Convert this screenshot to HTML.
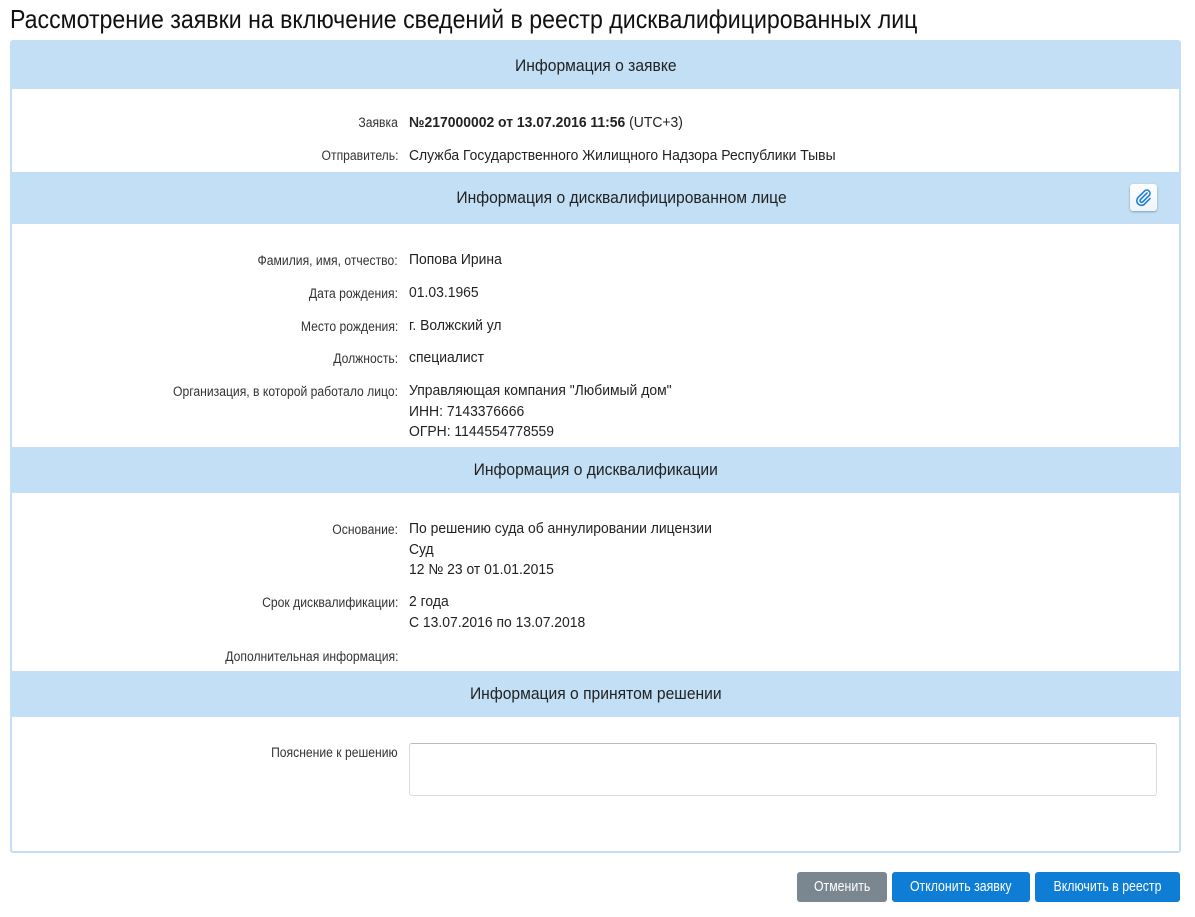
<!DOCTYPE html>
<html><head><meta charset="utf-8"><style>
body{margin:0;background:#fff;font-family:"Liberation Sans",sans-serif;color:#222;width:1195px;height:917px;position:relative;overflow:hidden}
h1{position:absolute;left:10px;top:4px;margin:0;font-weight:normal;font-size:26px;color:#111;white-space:nowrap;transform:scaleX(.89);transform-origin:left}
.panel{position:absolute;left:10px;top:40px;width:1167px;height:809px;border:2px solid #c3def5;border-radius:3px}
.hd{position:absolute;left:0;width:1167px;background:#c2dff5;text-align:center;font-size:17px;color:#222;box-sizing:border-box}
.hd span{display:inline-block;transform:scaleX(.92)}
.l{position:absolute;right:781px;font-size:13.5px;color:#333;text-align:right;white-space:nowrap;transform:scaleX(.9);transform-origin:right}
.v{position:absolute;left:397px;font-size:14.5px;color:#222;line-height:20.5px;white-space:nowrap;transform:scaleX(.96);transform-origin:left}
.btn{position:absolute;top:872px;height:30px;line-height:30px;color:#fff;text-align:center;font-size:14.5px;border-radius:3px}
.btn span{display:inline-block;transform:scaleX(.85)}
</style></head><body>
<h1>Рассмотрение заявки на включение сведений в реестр дисквалифицированных лиц</h1>
<div class="panel">
<div class="hd" style="top:0;height:47px;line-height:47px"><span>Информация о заявке</span></div>
<div class="l" style="top:73px">Заявка</div>
<div class="v" style="top:71px"><b>№217000002 от 13.07.2016 11:56</b> (UTC+3)</div>
<div class="l" style="top:106px">Отправитель:</div>
<div class="v" style="top:104px">Служба Государственного Жилищного Надзора Республики Тывы</div>
<div class="hd" style="top:130px;height:52px;line-height:52px;padding-left:52px"><span>Информация о дисквалифицированном лице</span></div>
<div style="position:absolute;left:1118px;top:142px;width:27px;height:27px;background:linear-gradient(#fff,#eef4fa);border-radius:3px;box-shadow:0 1px 2px rgba(0,0,0,.3)"><svg width="27" height="27" viewBox="0 0 27 27"><path d="M17 9 L10.5 15.5 a1.6 1.6 0 0 0 2.3 2.3 L19.3 11.3 a3.2 3.2 0 0 0 -4.5 -4.5 L8 13.6 a4.6 4.6 0 0 0 6.5 6.5 L20 14.6" fill="none" stroke="#1f7fd6" stroke-width="1.6" stroke-linecap="round"/></svg></div>
<div class="l" style="top:211px">Фамилия, имя, отчество:</div>
<div class="v" style="top:208px">Попова Ирина</div>
<div class="l" style="top:244px">Дата рождения:</div>
<div class="v" style="top:241px">01.03.1965</div>
<div class="l" style="top:277px">Место рождения:</div>
<div class="v" style="top:274px">г. Волжский ул</div>
<div class="l" style="top:309px">Должность:</div>
<div class="v" style="top:306px">специалист</div>
<div class="l" style="top:342px">Организация, в которой работало лицо:</div>
<div class="v" style="top:339px">Управляющая компания "Любимый дом"<br>ИНН: 7143376666<br>ОГРН: 1144554778559</div>
<div class="hd" style="top:405px;height:46px;line-height:46px"><span>Информация о дисквалификации</span></div>
<div class="l" style="top:480px">Основание:</div>
<div class="v" style="top:477px">По решению суда об аннулировании лицензии<br>Суд<br>12 № 23 от 01.01.2015</div>
<div class="l" style="top:553px">Срок дисквалификации:</div>
<div class="v" style="top:550px">2 года<br>С 13.07.2016 по 13.07.2018</div>
<div class="l" style="top:607px">Дополнительная информация:</div>
<div class="hd" style="top:629px;height:46px;line-height:46px"><span>Информация о принятом решении</span></div>
<div class="l" style="top:703px">Пояснение к решению</div>
<div style="position:absolute;left:397px;top:701px;width:746px;height:51px;border:1px solid #d8dbdf;border-top-color:#b8bcc0;border-radius:3px"></div>
</div>
<div class="btn" style="left:797px;width:90px;background:#7a8791"><span>Отменить</span></div>
<div class="btn" style="left:892px;width:138px;background:#0e7dd6"><span>Отклонить заявку</span></div>
<div class="btn" style="left:1035px;width:145px;background:#0e7dd6"><span>Включить в реестр</span></div>
</body></html>
